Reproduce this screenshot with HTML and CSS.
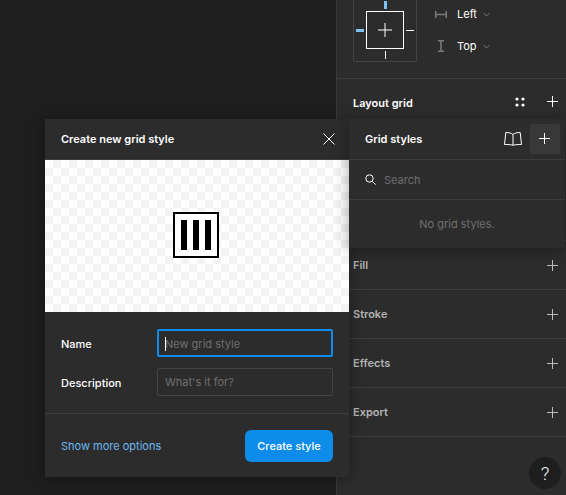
FILE: index.html
```html
<!DOCTYPE html>
<html lang="en">
<head>
  <meta charset="UTF-8" />
  <title>Create new grid style</title>
  <link rel="stylesheet" href="styles.css">
</head>
<body>
  <div class="app">
    <div class="canvas"></div>

    <aside class="sidebar">
      <section class="constraints">
        <div class="constraint-box">
          <span class="tick tick-top"></span>
          <span class="tick tick-left"></span>
          <span class="tick tick-right"></span>
          <span class="tick tick-bottom"></span>
          <div class="inner-box">
            <svg width="14" height="14" viewBox="0 0 14 14"><path d="M7 0v14M0 7h14" stroke="#fff" fill="none"/></svg>
          </div>
        </div>
        <div class="constraint-options">
          <div class="constraint-row">
            <svg class="constraint-icon" width="12" height="7" viewBox="0 0 12 7"><path d="M.75 0v7M11.250 0v7M1 3.500h10" stroke="#7b7b7b" stroke-width="1.500" fill="none"/></svg>
            <span>Left</span>
            <svg class="chevron" width="7" height="5" viewBox="0 0 7 5"><path d="M.5 1l3 3 3-3" stroke="#777" fill="none"/></svg>
          </div>
          <div class="constraint-row">
            <svg class="constraint-icon" width="12" height="12" viewBox="0 0 12 12"><path d="M3 .75h6M3 11.250h6M6 1v10" stroke="#7b7b7b" stroke-width="1.500" fill="none"/></svg>
            <span>Top</span>
            <svg class="chevron" width="7" height="5" viewBox="0 0 7 5"><path d="M.5 1l3 3 3-3" stroke="#777" fill="none"/></svg>
          </div>
        </div>
      </section>

      <section class="panel-section layout-grid">
        <h3>Layout grid</h3>
        <div class="section-actions">
          <svg width="10" height="10" viewBox="0 0 10 10" fill="#fff"><circle cx="2" cy="2" r="1.6"/><circle cx="8" cy="2" r="1.6"/><circle cx="2" cy="8" r="1.6"/><circle cx="8" cy="8" r="1.6"/></svg>
          <svg class="plus" width="11" height="11" viewBox="0 0 11 11"><path d="M5.5 0v11M0 5.5h11" stroke="#fff" fill="none"/></svg>
        </div>
      </section>

      <section class="panel-section muted">
        <h3>Fill</h3>
        <svg class="plus" width="11" height="11" viewBox="0 0 11 11"><path d="M5.5 0v11M0 5.5h11" stroke="#bdbdbd" fill="none"/></svg>
      </section>
      <section class="panel-section muted">
        <h3>Stroke</h3>
        <svg class="plus" width="11" height="11" viewBox="0 0 11 11"><path d="M5.5 0v11M0 5.5h11" stroke="#bdbdbd" fill="none"/></svg>
      </section>
      <section class="panel-section muted">
        <h3>Effects</h3>
        <svg class="plus" width="11" height="11" viewBox="0 0 11 11"><path d="M5.5 0v11M0 5.5h11" stroke="#bdbdbd" fill="none"/></svg>
      </section>
      <section class="panel-section muted">
        <h3>Export</h3>
        <svg class="plus" width="11" height="11" viewBox="0 0 11 11"><path d="M5.5 0v11M0 5.5h11" stroke="#bdbdbd" fill="none"/></svg>
      </section>
    </aside>

    <div class="help">?</div>

    <div class="modal">
      <div class="modal-header">
        <h2>Create new grid style</h2>
        <svg width="12" height="12" viewBox="0 0 12 12"><path d="M.5.5l11 11M11.500.5l-11 11" stroke="#fff" fill="none"/></svg>
      </div>
      <div class="preview">
        <svg width="46" height="46" viewBox="0 0 46 46">
          <path d="M1 1h44v44H1z" fill="#fff" stroke="#000" stroke-width="2"/>
          <path d="M8 8h6v30H8zM20 8h6v30h-6zM32 8h6v30h-6z" fill="#000"/>
        </svg>
      </div>
      <form class="modal-form">
        <div class="field">
          <label>Name</label>
          <div class="text-input focused"><span class="caret"></span>New grid style</div>
        </div>
        <div class="field">
          <label>Description</label>
          <div class="text-input">What's it for?</div>
        </div>
      </form>
      <div class="modal-footer">
        <a class="more-link">Show more options</a>
        <button type="button">Create style</button>
      </div>
    </div>

    <div class="popover">
      <div class="popover-header">
        <h3>Grid styles</h3>
        <svg class="book" width="18" height="14" viewBox="0 0 18 14"><path d="M9 2.500C7.500 1 4.500.5 1.800.5L.5 12.500c3 0 6.500 0 8.500.8 2-.8 5.500-.8 8.500-.8L16.200.5C13.500.5 10.500 1 9 2.500zM9 2.500v10.800" stroke="#fff" fill="none"/></svg>
        <div class="add-button">
          <svg width="11" height="11" viewBox="0 0 11 11"><path d="M5.5 0v11M0 5.5h11" stroke="#fff" fill="none"/></svg>
        </div>
      </div>
      <div class="popover-search">
        <svg width="11" height="11" viewBox="0 0 11 11"><circle cx="4.500" cy="4.500" r="3.700" stroke="#fff" fill="none"/><path d="M7.300 7.300l3.300 3.300" stroke="#fff" fill="none"/></svg>
        <span>Search</span>
      </div>
      <div class="popover-empty">No grid styles.</div>
    </div>
  </div>
</body>
</html>
```

FILE: styles.css
```css
* {
  box-sizing: border-box;
}

body {
  margin: 0;
  font-family: Inter, 'Liberation Sans', sans-serif;
  font-size: 11px;
  color: #fff;
  background: #1e1e1e;
}

h2,
h3 {
  margin: 0;
  font-size: 11px;
  font-weight: 600;
}

.app {
  position: relative;
  display: flex;
  width: 566px;
  height: 495px;
  overflow: hidden;
}

.canvas {
  width: 336px;
  background: #1e1e1e;
}

.sidebar {
  flex: 1;
  display: flex;
  flex-direction: column;
  background: #2c2c2c;
  border-left: 1px solid #3a3a3a;
}

/* constraints */

.constraints {
  display: flex;
  height: 79px;
  padding-left: 16px;
  border-bottom: 1px solid #3d3d3d;
}

.constraint-box {
  position: relative;
  width: 64px;
  height: 62px;
  border: 1px solid #444;
  border-top: 0;
  border-radius: 0 0 2px 2px;
  display: flex;
  align-items: flex-start;
  justify-content: center;
  padding-top: 11px;
}

.inner-box {
  width: 38px;
  height: 38px;
  border: 1px solid #fff;
  display: flex;
  align-items: center;
  justify-content: center;
}

.tick {
  position: absolute;
  background: #fff;
}

.tick-top {
  left: 30px;
  top: 1px;
  width: 3px;
  height: 8px;
  background: #7cc4f8;
}

.tick-left {
  left: 2px;
  top: 29px;
  width: 8px;
  height: 3px;
  background: #7cc4f8;
}

.tick-right {
  left: 52px;
  top: 30px;
  width: 8px;
  height: 1px;
}

.tick-bottom {
  left: 31px;
  top: 51px;
  width: 1px;
  height: 8px;
}

.constraint-options {
  display: flex;
  flex-direction: column;
  gap: 16px;
  padding: 6px 0 0 18px;
}

.constraint-row {
  display: flex;
  align-items: center;
  height: 16px;
  font-size: 11px;
}

.constraint-icon {
  width: 12px;
  margin-right: 10px;
}

.chevron {
  margin-left: 6px;
}

/* right panel sections */

.panel-section {
  display: flex;
  align-items: center;
  justify-content: space-between;
  height: 49px;
  padding: 0 8px 0 16px;
  border-bottom: 1px solid #3d3d3d;
}

.layout-grid {
  height: 162px;
  align-items: flex-start;
  padding-top: 17px;
  border-bottom: 1px solid #3d3d3d;
}

.section-actions {
  display: flex;
  align-items: center;
  gap: 22px;
}

.muted h3 {
  color: #b3b3b3;
}

.help {
  position: absolute;
  left: 529px;
  top: 457px;
  width: 32px;
  height: 32px;
  border-radius: 50%;
  background: #1e1e1e;
  display: flex;
  align-items: center;
  justify-content: center;
  font-family: Roboto, sans-serif;
  font-size: 19px;
  font-weight: 300;
  color: #fff;
}

/* create style modal */

.modal {
  position: absolute;
  left: 45px;
  top: 119px;
  width: 304px;
  height: 358px;
  background: #2c2c2c;
  box-shadow: 0 2px 14px rgba(0, 0, 0, 0.35);
}

.modal-header {
  display: flex;
  align-items: center;
  justify-content: space-between;
  height: 41px;
  padding: 0 14px 0 16px;
  border-bottom: 1px solid #3d3d3d;
}

.preview {
  display: flex;
  align-items: center;
  justify-content: center;
  height: 152px;
  padding: 0 2px 2px 0;
  background: repeating-conic-gradient(#f3f3f3 0 25%, #fff 0 50%) 0 0 / 16px 16px;
}

.modal-form {
  display: flex;
  flex-direction: column;
  gap: 11px;
  padding: 17px 16px 17px;
  border-bottom: 1px solid #3d3d3d;
}

.field {
  display: flex;
  align-items: center;
}

.field label {
  width: 96px;
  padding-top: 2px;
  font-weight: 500;
}

.text-input {
  position: relative;
  flex: 1;
  display: flex;
  align-items: center;
  height: 28px;
  padding-left: 7px;
  border: 1px solid #444;
  border-radius: 2px;
  color: #6f6f6f;
}

.text-input.focused {
  border: 2px solid #0d8ce9;
  padding: 2px 0 0 6px;
}

.caret {
  position: absolute;
  left: 6px;
  top: 6px;
  width: 1px;
  height: 14px;
  background: #fff;
}

.modal-footer {
  display: flex;
  align-items: center;
  justify-content: space-between;
  padding: 16px;
}

.more-link {
  color: #6db8f0;
}

button {
  width: 88px;
  height: 32px;
  border: none;
  border-radius: 6px;
  background: #0d8ce9;
  color: #fff;
  font-family: inherit;
  font-size: 11px;
  font-weight: 500;
}

/* grid styles popover */

.popover {
  position: absolute;
  left: 349px;
  top: 119px;
  width: 216px;
  height: 129px;
  background: #2c2c2c;
  box-shadow: 0 2px 14px rgba(0, 0, 0, 0.35);
}

.popover-header {
  display: flex;
  align-items: center;
  height: 41px;
  padding: 0 5px 0 16px;
  border-bottom: 1px solid #3d3d3d;
}

.popover-header h3 {
  flex: 1;
}

.book {
  margin-right: 8px;
}

.add-button {
  width: 30px;
  height: 30px;
  padding: 0 1px 1px 0;
  border-radius: 2px;
  background: #383838;
  display: flex;
  align-items: center;
  justify-content: center;
}

.popover-search {
  display: flex;
  align-items: center;
  gap: 8px;
  height: 40px;
  padding-left: 16px;
  border-bottom: 1px solid #3d3d3d;
  color: #6f6f6f;
}

.popover-empty {
  height: 48px;
  display: flex;
  align-items: center;
  justify-content: center;
  color: #6f6f6f;
}
```
